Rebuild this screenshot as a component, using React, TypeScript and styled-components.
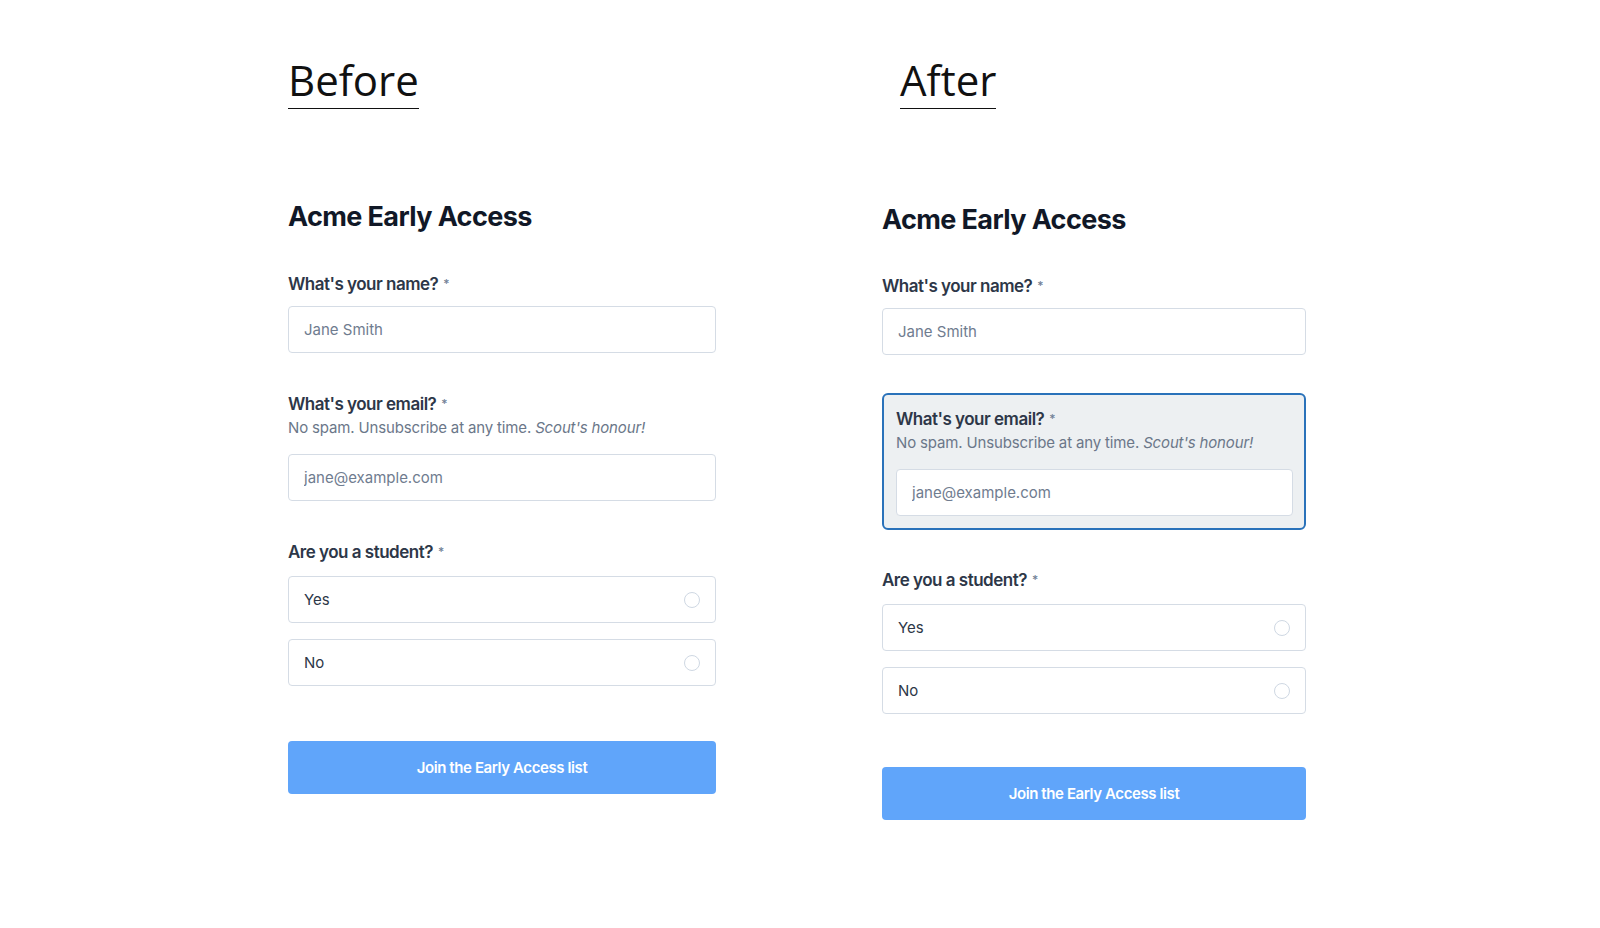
import React from 'react'
import styled, { createGlobalStyle } from 'styled-components'

const GlobalStyle = createGlobalStyle`
body{
    margin: 0;
    background: #ffffff;
    font-family: Inter, "Liberation Sans", sans-serif;
}
`

const Page = styled.div`
display: flex;
align-items: flex-start;
gap: 166px;
padding: 56px 0 0 288px;
width: 1600px;
height: 928px;
box-sizing: border-box;
`

const Column = styled.div<{ $width: number }>`
width: ${p => p.$width}px;
display: flex;
flex-direction: column;
`

const TitleWrap = styled.div<{ $indent: number }>`
padding-left: ${p => p.$indent}px;
height: 53px;
`

const Title = styled.span`
display: inline-block;
font-family: "Open Sans", "Noto Sans", sans-serif;
font-size: 42px;
line-height: 48px;
font-weight: 400;
color: #111111;
padding-bottom: 4px;
border-bottom: 1.5px solid #111111;
`

const Heading = styled.h2<{ $top: number }>`
margin: ${p => p.$top}px 0 0 0;
font-size: 27px;
line-height: 32px;
font-weight: 700;
color: #111827;
letter-spacing: -0.6px;
`

const Field = styled.div<{ $top: number }>`
margin-top: ${p => p.$top}px;
display: flex;
flex-direction: column;
`

const FocusField = styled(Field)`
background: #edf0f2;
border: 2px solid #2a72ba;
border-radius: 6px;
padding: 12px 11px 12px 12px;
`

const Label = styled.div`
font-size: 17px;
line-height: 24px;
font-weight: 600;
color: #2d3748;
letter-spacing: -0.5px;
>span{
    font-size: 12px;
    font-weight: 500;
    color: #718096;
    margin-left: 5px;
    letter-spacing: 0;
    vertical-align: 2px;
}
`

const Help = styled.div`
font-size: 15px;
line-height: 23px;
color: #6b7789;
letter-spacing: -0.15px;
>em{
    font-style: italic;
}
`

const TextInput = styled.input<{ $gap: number }>`
margin-top: ${p => p.$gap}px;
height: 47px;
box-sizing: border-box;
width: 100%;
border: 1px solid #d5dce5;
border-radius: 4px;
background: #ffffff;
padding: 0 15px;
font-family: Inter, "Liberation Sans", sans-serif;
font-size: 15px;
color: #2d3748;
outline: none;
&::placeholder{
    color: #6f7c8f;
}
`

const Options = styled.div`
margin-top: 12px;
display: flex;
flex-direction: column;
gap: 16px;
`

const Option = styled.label`
height: 47px;
box-sizing: border-box;
border: 1px solid #d5dce5;
border-radius: 4px;
display: flex;
align-items: center;
justify-content: space-between;
padding: 0 15px;
font-size: 15px;
color: #2d3748;
cursor: pointer;
`

const Radio = styled.input`
appearance: none;
margin: 0;
width: 16px;
height: 16px;
border: 1px solid #cfd8e3;
border-radius: 50%;
background: #ffffff;
`

const Submit = styled.button<{ $top: number }>`
margin-top: ${p => p.$top}px;
height: 53px;
width: 100%;
border: none;
border-radius: 4px;
background: #60a5fa;
color: #ffffff;
font-family: Inter, "Liberation Sans", sans-serif;
font-size: 15px;
font-weight: 600;
letter-spacing: -0.4px;
cursor: pointer;
`

const Req = () => <span>*</span>

const EmailParts: React.FC = () => (
    <>
        <Label>What's your email?<Req /></Label>
        <Help>No spam. Unsubscribe at any time. <em>Scout's honour!</em></Help>
        <TextInput $gap={15} type="email" placeholder="jane@example.com" />
    </>
)

type FormProps = {
    focused: boolean
    name: string
    headingTop: number
    gap: number
    submitGap: number
}

const EarlyAccessForm: React.FC<FormProps> = ({ focused, name, headingTop, gap, submitGap }) => {
    return (
        <>
            <Heading $top={headingTop}>Acme Early Access</Heading>
            <Field $top={gap}>
                <Label>What's your name?<Req /></Label>
                <TextInput $gap={10} type="text" placeholder="Jane Smith" />
            </Field>
            {focused ? (
                <FocusField $top={gap}><EmailParts /></FocusField>
            ) : (
                <Field $top={gap}><EmailParts /></Field>
            )}
            <Field $top={gap}>
                <Label>Are you a student?<Req /></Label>
                <Options>
                    <Option>Yes<Radio type="radio" name={name} /></Option>
                    <Option>No<Radio type="radio" name={name} /></Option>
                </Options>
            </Field>
            <Submit $top={submitGap} type="button">Join the Early Access list</Submit>
        </>
    )
}

export default function App() {
    return (
        <>
            <GlobalStyle />
            <Page>
                <Column $width={428}>
                    <TitleWrap $indent={0}><Title>Before</Title></TitleWrap>
                    <EarlyAccessForm focused={false} name="student-before" headingTop={92} gap={39} submitGap={55} />
                </Column>
                <Column $width={424}>
                    <TitleWrap $indent={18}><Title>After</Title></TitleWrap>
                    <EarlyAccessForm focused={true} name="student-after" headingTop={95} gap={38} submitGap={53} />
                </Column>
            </Page>
        </>
    )
}
